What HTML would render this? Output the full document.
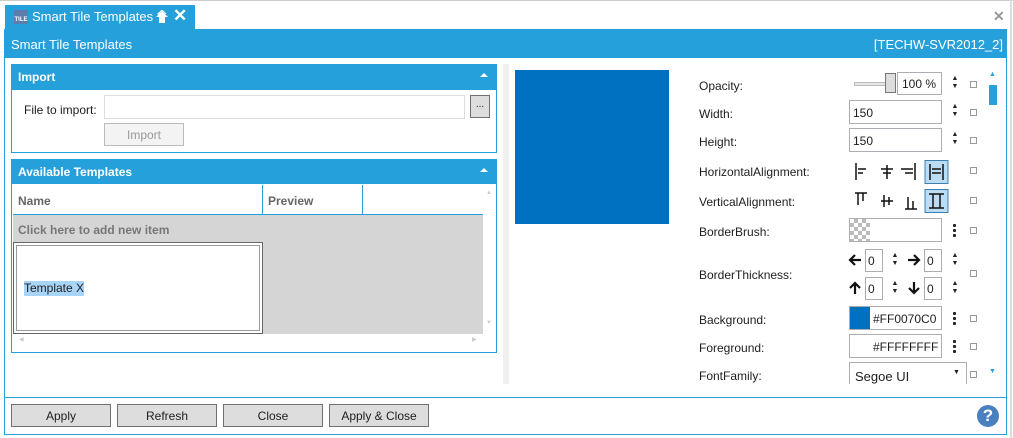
<!DOCTYPE html>
<html><head><meta charset="utf-8"><style>
*{box-sizing:border-box;margin:0;padding:0}
body{width:1013px;height:438px;background:#fff;font-family:"Liberation Sans",sans-serif;font-size:12px;color:#1e1e1e;position:relative;overflow:hidden}
.a{position:absolute}
.blue{background:#26a0da;color:#fff}
.box{position:absolute;border:1px solid #abadb3;background:#fff}
.lbl{position:absolute;left:699px;font-size:12px}
.sq{position:absolute;left:970px;width:7px;height:7px;border:1px solid #999}
.spin{position:absolute;font-size:7px;line-height:8px;color:#222;text-align:center;width:8px}
.btn{position:absolute;top:404px;height:23px;background:#ddd;border:1px solid #707070;text-align:center;line-height:23px;font-size:12px}
.dots{position:absolute;left:953px;width:3px;font-size:0}
.dots i{display:block;width:3px;height:3px;background:#222;margin-bottom:2px;border-radius:1px}
</style></head><body>
<div class="a" style="left:0;top:0;width:1013px;height:1px;background:#ccc"></div>
<div class="a" style="left:1010px;top:0;width:2px;height:438px;background:#ddd"></div>
<!-- tab -->
<div class="a blue" style="left:5px;top:5px;width:190px;height:25px;"></div>
<div class="a" style="left:14px;top:10px;width:14px;height:14px;background:#5c7cab;color:#fff;font-size:6px;font-weight:bold;line-height:20px;text-align:center">TILE</div>
<div class="a" style="left:32px;top:9px;color:#fff;font-size:13px">Smart Tile Templates *</div>
<svg class="a" style="left:155px;top:10px" width="14" height="14"><path d="M7 1 L1 7 H4 V13 H10 V7 H13 Z" fill="#fff"/><path d="M3 4 L7 0 L11 4" stroke="#fff" fill="none"/></svg>
<div class="a" style="left:173px;top:6px;color:#fff;font-size:17px;font-weight:bold">✕</div>
<div class="a" style="left:993px;top:8px;color:#999;font-size:14px;font-weight:bold">✕</div>
<!-- header -->
<div class="a blue" style="left:4px;top:29px;width:1003px;height:29px"></div>
<div class="a" style="left:11px;top:37px;color:#fff;font-size:13px">Smart Tile Templates</div>
<div class="a" style="right:10px;top:37px;color:#fff;font-size:13px">[TECHW-SVR2012_2]</div>
<!-- outer borders -->
<div class="a" style="left:4px;top:58px;width:1003px;height:377px;border:1px solid #26a0da;border-top:none"></div>
<div class="a" style="left:4px;top:397px;width:1003px;height:1px;background:#26a0da"></div>
<!-- import panel -->
<div class="a" style="left:11px;top:64px;width:486px;height:89px;border:1px solid #26a0da"></div>
<div class="a blue" style="left:11px;top:64px;width:486px;height:26px"></div>
<div class="a" style="left:18px;top:70px;color:#fff;font-weight:bold;font-size:12px">Import</div>
<div class="a" style="left:480px;top:73px;width:0;height:0;border-left:4px solid transparent;border-right:4px solid transparent;border-bottom:4px solid #fff"></div>
<div class="a" style="left:24px;top:103px">File to import:</div>
<div class="box" style="left:104px;top:95px;width:361px;height:24px;border-color:#ddd"></div>
<div class="a" style="left:470px;top:95px;width:20px;height:23px;background:#ddd;border:1px solid #707070;text-align:center;font-size:10px;line-height:18px">...</div>
<div class="a" style="left:104px;top:123px;width:80px;height:23px;background:#f3f3f3;border:1px solid #bbb;color:#999;text-align:center;line-height:23px">Import</div>
<!-- templates panel -->
<div class="a" style="left:11px;top:159px;width:486px;height:194px;border:1px solid #26a0da"></div>
<div class="a blue" style="left:11px;top:159px;width:486px;height:25px"></div>
<div class="a" style="left:18px;top:165px;color:#fff;font-weight:bold;font-size:12px">Available Templates</div>
<div class="a" style="left:480px;top:168px;width:0;height:0;border-left:4px solid transparent;border-right:4px solid transparent;border-bottom:4px solid #fff"></div>
<div class="a" style="left:13px;top:214px;width:470px;height:1px;background:#26a0da"></div>
<div class="a" style="left:262px;top:185px;width:1px;height:30px;background:#26a0da"></div>
<div class="a" style="left:362px;top:185px;width:1px;height:30px;background:#26a0da"></div>
<div class="a" style="left:18px;top:194px;font-weight:bold;color:#666">Name</div>
<div class="a" style="left:268px;top:194px;font-weight:bold;color:#666">Preview</div>
<div class="a" style="left:13px;top:215px;width:470px;height:119px;background:#d6d5d6"></div>
<div class="a" style="left:18px;top:223px;color:#777;font-weight:bold">Click here to add new item</div>
<div class="a" style="left:13px;top:242px;width:250px;height:92px;background:#fff;border:1px solid #666"></div>
<div class="a" style="left:16px;top:245px;width:244px;height:86px;border:1px solid #999"></div>
<div class="a" style="left:24px;top:281px;background:#a8d4f8;padding:0 0 1px">Template X</div>
<div class="a" style="left:486px;top:190px;color:#ccc;font-size:6px">▲</div>
<div class="a" style="left:486px;top:320px;color:#ccc;font-size:6px">▼</div>
<div class="a" style="left:19px;top:336px;color:#ccc;font-size:6px">◀</div>
<div class="a" style="left:472px;top:336px;color:#ccc;font-size:6px">▶</div>
<!-- splitter -->
<div class="a" style="left:503px;top:64px;width:6px;height:320px;background:#f0f0f0"></div>
<!-- preview -->
<div class="a" style="left:515px;top:70px;width:154px;height:154px;background:#0070c0"></div>
<!-- properties -->
<div class="lbl" style="top:79px">Opacity:</div>
<div class="a" style="left:854px;top:82px;width:32px;height:4px;background:#e6e6e6;border:1px solid #bbb"></div>
<div class="a" style="left:885px;top:73px;width:11px;height:20px;background:#ddd;border:1px solid #777"></div>
<div class="box" style="left:897px;top:72px;width:45px;height:23px;padding:4px 0 0 4px">100 %</div>
<div class="lbl" style="top:107px">Width:</div>
<div class="box" style="left:849px;top:100px;width:93px;height:24px;padding:5px 0 0 3px">150</div>
<div class="lbl" style="top:135px">Height:</div>
<div class="box" style="left:849px;top:128px;width:93px;height:24px;padding:5px 0 0 3px">150</div>
<div class="spin" style="left:951px;top:75px">▲<br>▼</div>
<div class="spin" style="left:951px;top:103px">▲<br>▼</div>
<div class="spin" style="left:951px;top:131px">▲<br>▼</div>
<div class="lbl" style="top:165px">HorizontalAlignment:</div>
<svg class="a" style="left:853px;top:160px" width="100" height="24">
<g stroke="#111" stroke-width="1.5" fill="none">
<path d="M3 3V20M5 9H13M5 13H10"/>
<path d="M34 5V19M28 9H40M30 13H38"/>
<path d="M62 3V20M48 9H60M52 13H60"/>
</g>
<rect x="72" y="0.5" width="23" height="23" fill="#bcdcf4" stroke="#3c7fb1"/>
<path d="M77 4V20M90 4V20M79 9H88M79 13H88" stroke="#111" stroke-width="1.5"/>
</svg>
<div class="lbl" style="top:195px">VerticalAlignment:</div>
<svg class="a" style="left:853px;top:189px" width="100" height="24">
<g stroke="#111" stroke-width="1.5" fill="none">
<path d="M2 4H14M5 4V16M10 4V12"/>
<path d="M28 12H40M31 6V18M36 8V16"/>
<path d="M52 20H64M55 8V20M60 12V20"/>
</g>
<rect x="72" y="0.5" width="23" height="23" fill="#bcdcf4" stroke="#3c7fb1"/>
<path d="M76 5H91M76 19H91M80 5V19M87 5V19" stroke="#111" stroke-width="1.5"/>
</svg>
<div class="lbl" style="top:225px">BorderBrush:</div>
<div class="box" style="left:849px;top:218px;width:93px;height:24px;background:#fff"></div>
<div class="a" style="left:850px;top:219px;width:20px;height:22px;background:repeating-conic-gradient(#bbb 0 25%,#fff 0 50%) 0 0/8px 8px"></div>
<div class="dots" style="top:224px"><i></i><i></i><i></i></div>
<div class="lbl" style="top:268px">BorderThickness:</div>
<svg class="a" style="left:848px;top:253px" width="14" height="14"><path d="M13 7H2M7 2L2 7L7 12" stroke="#111" stroke-width="2.2" fill="none"/></svg>
<div class="box" style="left:865px;top:249px;width:18px;height:23px;padding:4px 0 0 2px">0</div>
<div class="spin" style="left:891px;top:252px">▲<br>▼</div>
<svg class="a" style="left:907px;top:253px" width="14" height="14"><path d="M1 7H12M7 2L12 7L7 12" stroke="#111" stroke-width="2.2" fill="none"/></svg>
<div class="box" style="left:924px;top:249px;width:18px;height:23px;padding:4px 0 0 2px">0</div>
<div class="spin" style="left:951px;top:252px">▲<br>▼</div>
<svg class="a" style="left:848px;top:281px" width="14" height="14"><path d="M7 13V2M2 7L7 2L12 7" stroke="#111" stroke-width="2.2" fill="none"/></svg>
<div class="box" style="left:865px;top:277px;width:18px;height:23px;padding:4px 0 0 2px">0</div>
<div class="spin" style="left:891px;top:280px">▲<br>▼</div>
<svg class="a" style="left:907px;top:281px" width="14" height="14"><path d="M7 1V12M2 7L7 12L12 7" stroke="#111" stroke-width="2.2" fill="none"/></svg>
<div class="box" style="left:924px;top:277px;width:18px;height:23px;padding:4px 0 0 2px">0</div>
<div class="spin" style="left:951px;top:280px">▲<br>▼</div>
<div class="lbl" style="top:313px">Background:</div>
<div class="box" style="left:849px;top:306px;width:93px;height:24px;padding:5px 0 0 23px">#FF0070C0</div>
<div class="a" style="left:850px;top:307px;width:20px;height:22px;background:#0070c0"></div>
<div class="dots" style="top:312px"><i></i><i></i><i></i></div>
<div class="lbl" style="top:341px">Foreground:</div>
<div class="box" style="left:849px;top:334px;width:93px;height:24px;padding:5px 0 0 23px">#FFFFFFFF</div>
<div class="dots" style="top:340px"><i></i><i></i><i></i></div>
<div class="lbl" style="top:369px">FontFamily:</div>
<div class="box" style="left:849px;top:362px;width:118px;height:24px;padding:6px 0 0 5px;font-size:13px;">Segoe UI</div>
<div class="a" style="left:953px;top:369px;font-size:7px">▼</div>
<div class="a" style="left:843px;top:384px;width:135px;height:13px;background:#fff"></div>
<div class="sq" style="top:81px"></div><div class="sq" style="top:109px"></div><div class="sq" style="top:137px"></div>
<div class="sq" style="top:167px"></div><div class="sq" style="top:197px"></div><div class="sq" style="top:227px"></div>
<div class="sq" style="top:270px"></div><div class="sq" style="top:315px"></div><div class="sq" style="top:343px"></div>
<div class="sq" style="top:371px"></div>
<!-- scrollbar -->
<div class="a" style="left:989px;top:71px;color:#26a0da;font-size:7px">▲</div>
<div class="a" style="left:989px;top:85px;width:8px;height:20px;background:#26a0da"></div>
<div class="a" style="left:989px;top:368px;color:#26a0da;font-size:7px">▼</div>
<!-- footer -->
<div class="btn" style="left:11px;width:100px">Apply</div>
<div class="btn" style="left:117px;width:100px">Refresh</div>
<div class="btn" style="left:223px;width:100px">Close</div>
<div class="btn" style="left:329px;width:100px">Apply &amp; Close</div>
<div class="a" style="left:977px;top:405px;width:22px;height:22px;border-radius:50%;background:#4a80c0;color:#fff;font-weight:bold;font-size:17px;text-align:center;line-height:22px">?</div>
</body></html>
